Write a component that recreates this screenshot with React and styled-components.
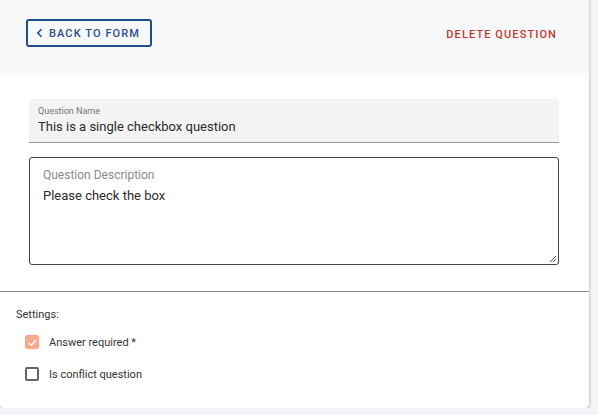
import React from 'react'
import styled, { createGlobalStyle } from 'styled-components'

const GlobalStyle = createGlobalStyle`
    body{
        margin: 0;
        background-color: #f3f4f8;
        font-family: Roboto, "Liberation Sans", sans-serif;
    }
`;

function App() {
  return (
    <>
      <GlobalStyle />
      <Card>
        <Header>
          <BackButton>
            <svg width="8" height="10" viewBox="0 0 8 10">
              <path d="M5.5 1.2 L1.8 5 L5.5 8.8" fill="none" stroke="#1f4e8c" strokeWidth="1.6" />
            </svg>
            Back to form
          </BackButton>
          <DeleteButton>Delete question</DeleteButton>
        </Header>
        <Body>
          <FilledField>
            <SmallLabel>Question Name</SmallLabel>
            <FieldValue>This is a single checkbox question</FieldValue>
          </FilledField>
          <OutlinedField>
            <OutlinedLabel>Question Description</OutlinedLabel>
            <FieldValue>Please check the box</FieldValue>
            <Grip viewBox="0 0 10 10">
              <path d="M9 3 L3 9 M9 6 L6 9" stroke="#555" strokeWidth="1" />
            </Grip>
          </OutlinedField>
        </Body>
        <Divider />
        <Settings>
          <SettingsTitle>Settings:</SettingsTitle>
          <CheckRow>
            <Box checked>
              <svg width="11" height="11" viewBox="0 0 12 12">
                <path d="M2 6.2 L4.8 9 L10 3.2" fill="none" stroke="#fff" strokeWidth="1.6" />
              </svg>
            </Box>
            <span>Answer required *</span>
          </CheckRow>
          <CheckRow>
            <Box />
            <span>Is conflict question</span>
          </CheckRow>
        </Settings>
      </Card>
    </>
  )
}

const Card = styled.div`
    width: 589px;
    background-color: #fff;
    border-radius: 0px 0px 4px 4px;
    box-shadow: 0px 1px 3px rgba(0,0,0,0.25), 1px 0px 2px rgba(0,0,0,0.08);
    padding-bottom: 25px;
`;

const Header = styled.div`
    height: 73px;
    background-color: #f7f8fa;
    display: flex;
    align-items: flex-start;
    justify-content: space-between;
    padding: 19px 26px 0px 26px;
    box-sizing: border-box;
`;

const BackButton = styled.div`
    width: 126px;
    height: 28px;
    box-sizing: border-box;
    border: 2px solid #1f4e8c;
    border-radius: 3px;
    display: flex;
    align-items: center;
    gap: 5px;
    padding-left: 8px;
    color: #2a5188;
    font-size: 11px;
    font-weight: 500;
    letter-spacing: 1.1px;
    text-transform: uppercase;
`;

const DeleteButton = styled.div`
    color: #c0392b;
    font-size: 11px;
    font-weight: 500;
    letter-spacing: 1.1px;
    text-transform: uppercase;
    line-height: 14px;
    padding: 9px 6px 7px 8px;
`;

const Body = styled.div`
    padding: 26px 30px 26px 29px;
    display: flex;
    flex-direction: column;
    gap: 14px;
`;

const FilledField = styled.div`
    height: 44px;
    box-sizing: border-box;
    background-color: #f3f3f3;
    border-bottom: 1px solid #9a9a9a;
    border-radius: 4px 4px 0px 0px;
    padding: 7px 9px 0px 9px;
`;

const SmallLabel = styled.div`
    font-size: 9px;
    color: #757575;
    line-height: 11px;
`;

const FieldValue = styled.div`
    font-size: 13px;
    color: #2b2b2b;
    line-height: 17px;
    margin-top: 1px;
`;

const OutlinedField = styled.div`
    position: relative;
    height: 108px;
    box-sizing: border-box;
    border: 1px solid #444;
    border-radius: 3px;
    padding: 9px 13px;
`;

const OutlinedLabel = styled.div`
    font-size: 12px;
    color: #8a8a8a;
    line-height: 16px;
    margin-bottom: 4px;
`;

const Grip = styled.svg`
    position: absolute;
    right: 1px;
    bottom: 1px;
    width: 10px;
    height: 10px;
`;

const Divider = styled.div`
    height: 1px;
    background-color: #8a8a8a;
`;

const Settings = styled.div`
    padding: 16px 16px 0px 16px;
    font-size: 11px;
    color: #333;
`;

const SettingsTitle = styled.div`
    line-height: 14px;
    margin-bottom: 11px;
`;

const CheckRow = styled.div`
    display: flex;
    align-items: center;
    gap: 10px;
    padding-left: 9px;
    height: 18px;
    margin-bottom: 14px;
    &:last-child{
        margin-bottom: 0px;
    }
`;

const Box = styled.div`
    width: 14px;
    height: 14px;
    box-sizing: border-box;
    border-radius: 2px;
    display: flex;
    align-items: center;
    justify-content: center;
    background-color: ${props => props.checked ? '#f9a98c' : 'transparent'};
    border: ${props => props.checked ? 'none' : '2px solid #666'};
`;

export default App
